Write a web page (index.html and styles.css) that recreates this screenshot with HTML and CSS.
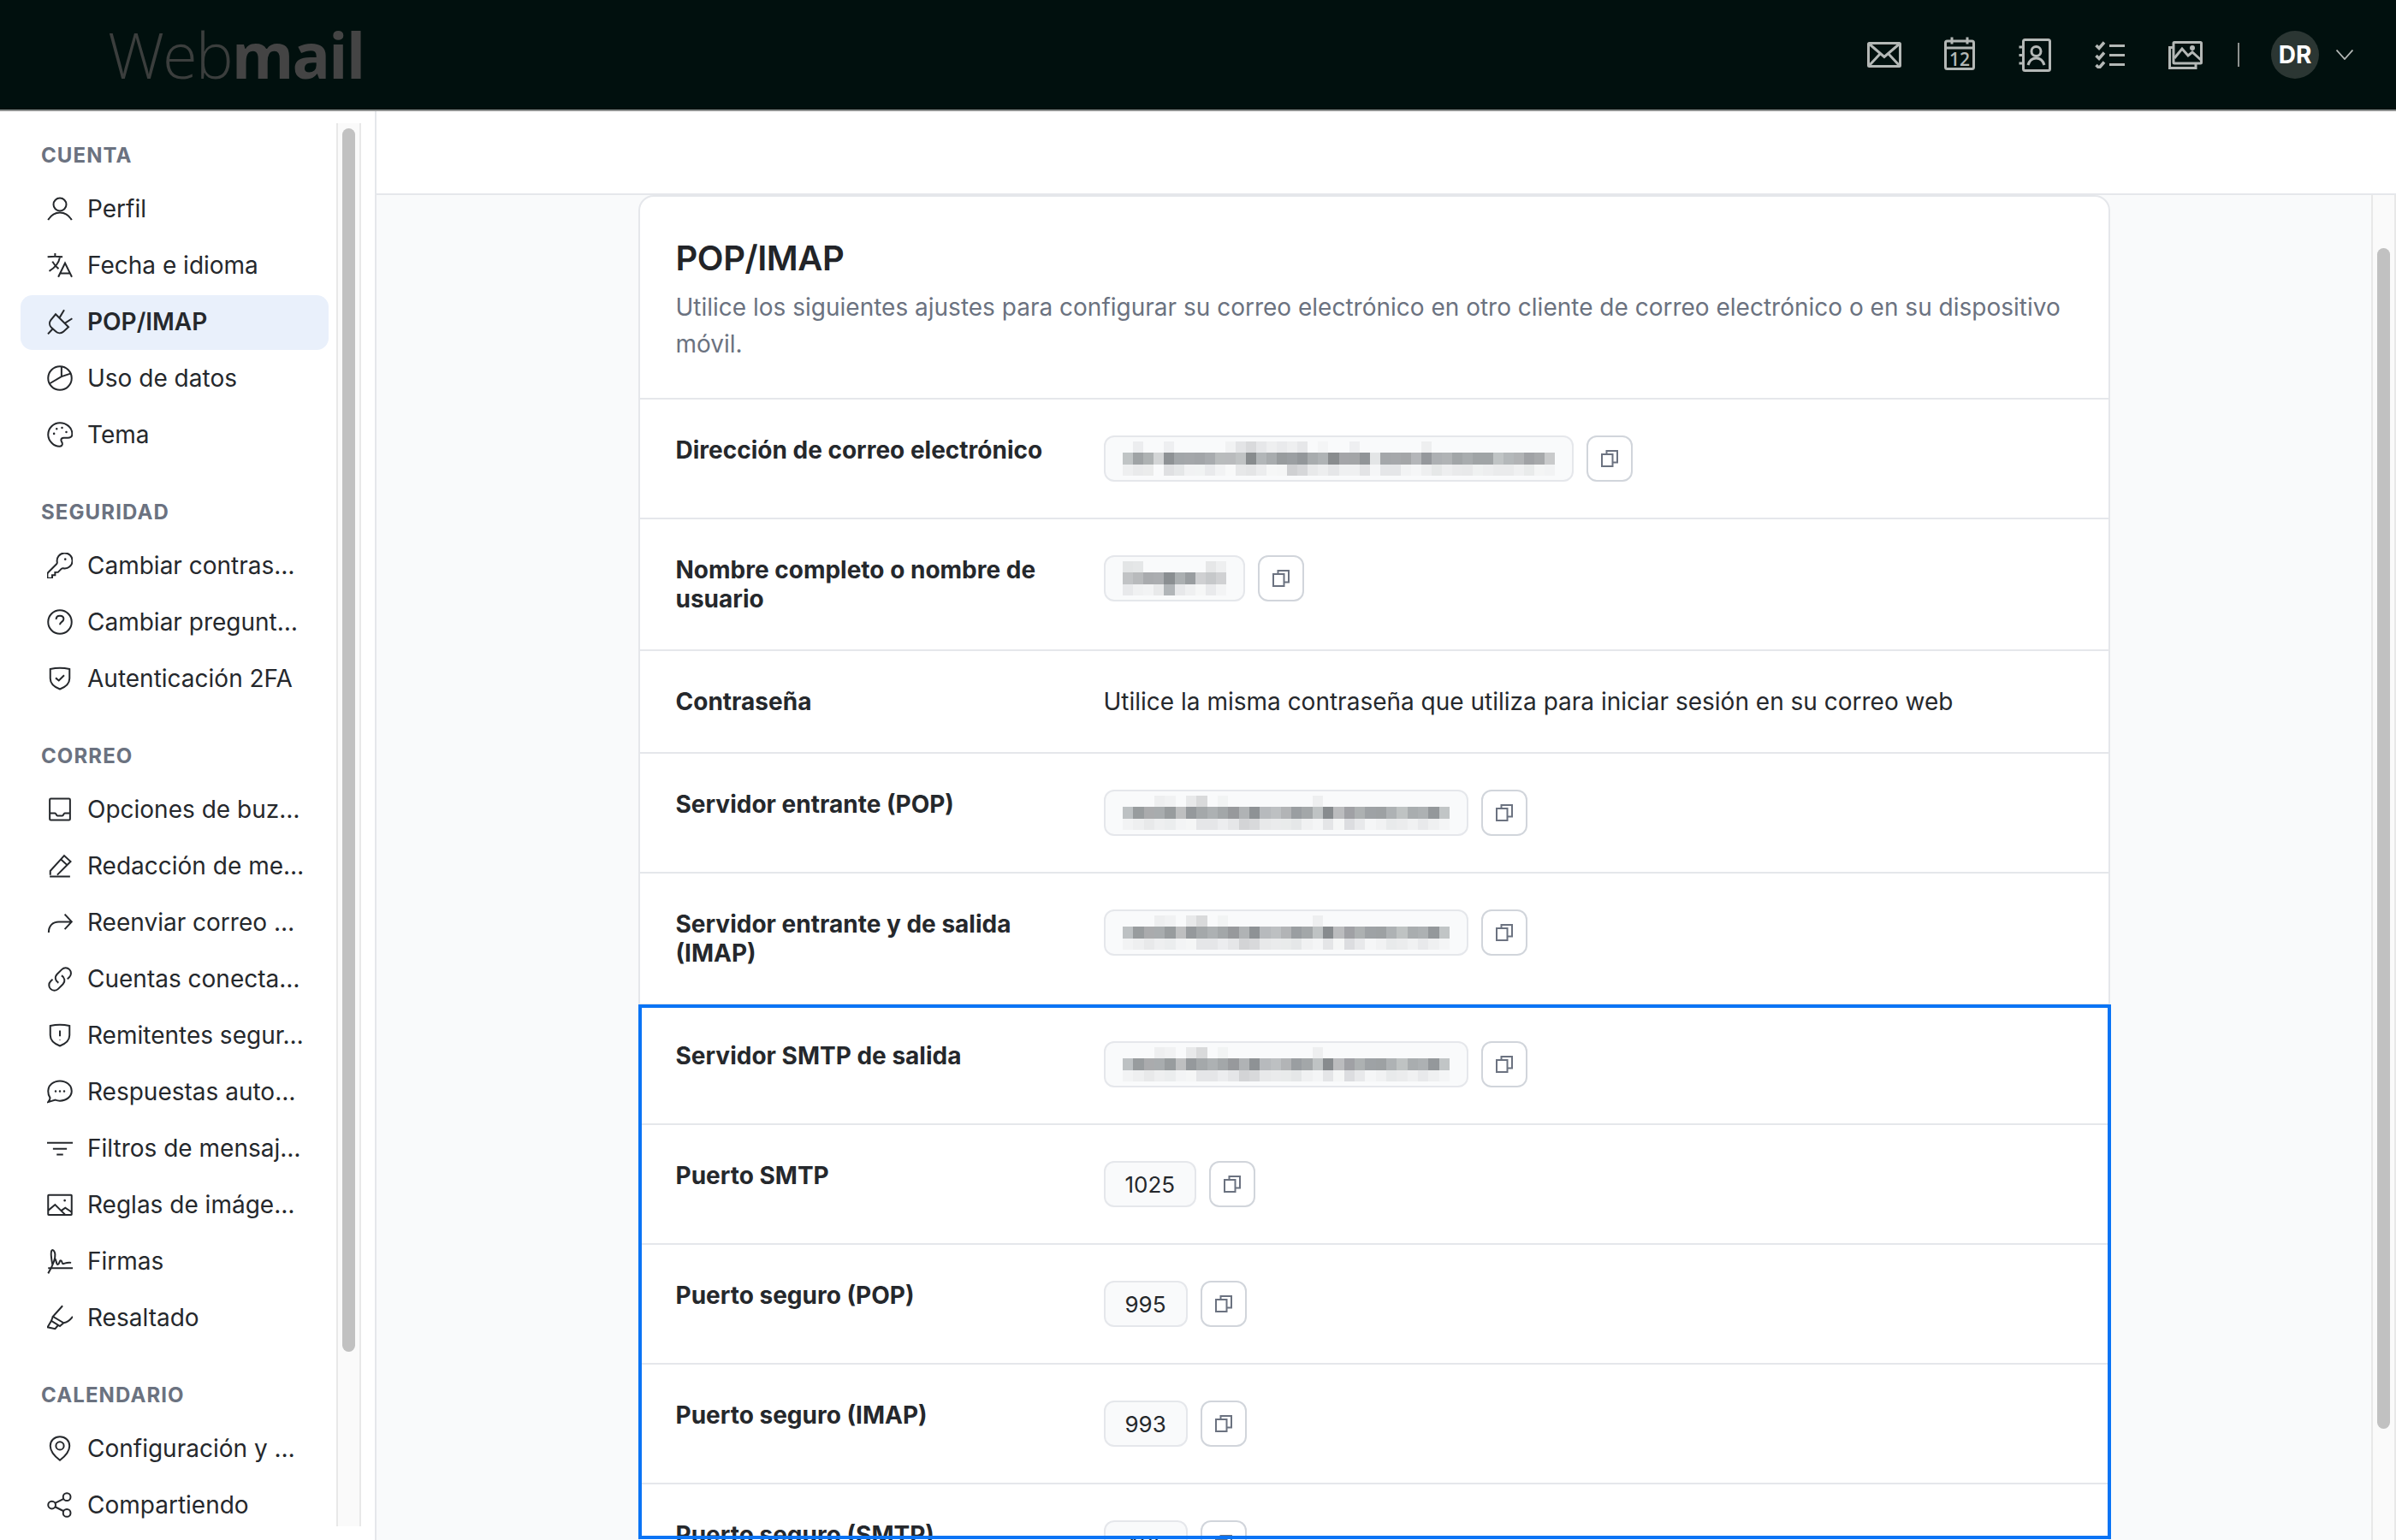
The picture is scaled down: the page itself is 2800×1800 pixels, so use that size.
FILE: index.html
```html
<!DOCTYPE html>
<html lang="es">
<head>
<meta charset="utf-8">
<title>Webmail - POP/IMAP</title>
<link rel="stylesheet" href="styles.css">
</head>
<body>
<svg class="defs" aria-hidden="true">
  <symbol id="copy" viewBox="0 0 20 20"><path d="M6.5 5V1h12.500v13.500h-5"/><rect x="1" y="5" width="12.500" height="14"/></symbol>
  <symbol id="shield-o" viewBox="0 0 24 24"><path d="M3 3.200c6-1.400 12-1.400 18 0V12c0 4.500-3.500 7.900-9 10-5.500-2.100-9-5.500-9-10z"/></symbol>
  <symbol id="blur-email" class="mosaic" viewBox="0 0 42 3" preserveAspectRatio="none">
    <g>
      <rect x="1" fill="#ecedef"/><rect x="4" fill="#eeeff1"/><rect x="10" fill="#f1f2f3"/><rect x="11" fill="#e3e4e6"/><rect x="12" fill="#d9dadc"/><rect x="13" fill="#e6e7e9"/><rect x="14" fill="#eeeff0"/><rect x="15" fill="#e9eaec"/><rect x="16" fill="#eeeff0"/><rect x="17" fill="#e6e7e9"/><rect x="19" fill="#f4f5f6"/><rect x="22" fill="#eeeff1"/><rect x="29" fill="#eeeff0"/>
    </g>
    <g transform="translate(0 1)">
      <rect x="0" fill="#c0c4c5"/><rect x="1" fill="#9fa3a5"/><rect x="2" fill="#aeb2b3"/><rect x="3" fill="#d3d5d6"/><rect x="4" fill="#8e9295"/><rect x="5" fill="#a2a6a9"/><rect x="6" fill="#a4a7aa"/><rect x="7" fill="#a2a5a8"/><rect x="8" fill="#a8abae"/><rect x="9" fill="#b9bcbd"/><rect x="10" fill="#b9bbbd"/><rect x="11" fill="#c0c3c4"/><rect x="12" fill="#888c8e"/><rect x="13" fill="#b2b6b8"/><rect x="14" fill="#a8acae"/><rect x="15" fill="#989c9e"/><rect x="16" fill="#9b9fa2"/><rect x="17" fill="#93979a"/><rect x="18" fill="#a8acae"/><rect x="19" fill="#afb3b5"/><rect x="20" fill="#898c8e"/><rect x="21" fill="#a4a5a8"/><rect x="22" fill="#a3a5a7"/><rect x="23" fill="#919598"/><rect x="24" fill="#e3e5e6"/><rect x="25" fill="#a4a7aa"/><rect x="26" fill="#a6a8ab"/><rect x="27" fill="#a4a6a8"/><rect x="28" fill="#b4b6b9"/><rect x="29" fill="#95989c"/><rect x="30" fill="#adb0b3"/><rect x="31" fill="#b0b3b5"/><rect x="32" fill="#a1a5a7"/><rect x="33" fill="#a8acae"/><rect x="34" fill="#a0a4a6"/><rect x="35" fill="#a0a4a6"/><rect x="36" fill="#c0c4c5"/><rect x="37" fill="#b4b8ba"/><rect x="38" fill="#b1b3b5"/><rect x="39" fill="#a0a2a5"/><rect x="40" fill="#a7a9ab"/><rect x="41" fill="#c9cacb"/>
    </g>
    <g transform="translate(0 2)">
      <rect x="0" fill="#eeeff0"/><rect x="1" fill="#e9eaeb"/><rect x="2" fill="#ebecec"/><rect x="4" fill="#dfe0e2"/><rect x="5" fill="#e5e7e8"/><rect x="6" fill="#f1f2f3"/><rect x="7" fill="#f1f3f3"/><rect x="8" fill="#e9eaec"/><rect x="9" fill="#f2f3f4"/><rect x="10" fill="#f8f9f9"/><rect x="11" fill="#e7e8e9"/><rect x="12" fill="#e4e5e6"/><rect x="13" fill="#ecedee"/><rect x="14" fill="#f6f7f7"/><rect x="15" fill="#f5f6f6"/><rect x="16" fill="#cfd0d2"/><rect x="17" fill="#d6d7d9"/><rect x="18" fill="#e8e9ea"/><rect x="19" fill="#edeeef"/><rect x="20" fill="#e5e6e8"/><rect x="21" fill="#eff0f1"/><rect x="22" fill="#eff0f1"/><rect x="23" fill="#e3e4e6"/><rect x="24" fill="#f5f6f7"/><rect x="25" fill="#e5e6e8"/><rect x="26" fill="#e5e6e8"/><rect x="27" fill="#f2f3f4"/><rect x="28" fill="#f5f6f7"/><rect x="29" fill="#eeeff0"/><rect x="30" fill="#e6e8e8"/><rect x="31" fill="#edeeef"/><rect x="32" fill="#e9eaeb"/><rect x="33" fill="#e8e9ea"/><rect x="34" fill="#eff1f1"/><rect x="35" fill="#edeeef"/><rect x="36" fill="#eaebec"/><rect x="37" fill="#eaebec"/><rect x="38" fill="#eff0f1"/><rect x="39" fill="#e9ebeb"/><rect x="40" fill="#f4f5f5"/><rect x="41" fill="#f2f3f4"/>
    </g>
  </symbol>
  <symbol id="blur-name" class="mosaic" viewBox="0 0 10 3" preserveAspectRatio="none">
    <g>
      <rect x="0" fill="#e3e5e6"/><rect x="1" fill="#e5e7e8"/><rect x="8" fill="#e6e7e8"/><rect x="9" fill="#eeeff0"/>
    </g>
    <g transform="translate(0 1)">
      <rect x="0" fill="#c1c3c5"/><rect x="1" fill="#b8babc"/><rect x="2" fill="#a9abae"/><rect x="3" fill="#abadb0"/><rect x="4" fill="#8a8e91"/><rect x="5" fill="#abafb1"/><rect x="6" fill="#999da0"/><rect x="7" fill="#cfd0d2"/><rect x="8" fill="#c6c8ca"/><rect x="9" fill="#d0d1d3"/>
    </g>
    <g transform="translate(0 2)">
      <rect x="0" fill="#e8e9eb"/><rect x="1" fill="#f0f1f2"/><rect x="2" fill="#f2f3f4"/><rect x="3" fill="#e8e9ea"/><rect x="4" fill="#b1b5b8"/><rect x="5" fill="#e7e8ea"/><rect x="6" fill="#eff0f1"/><rect x="7" fill="#f6f7f7"/><rect x="8" fill="#e9eaec"/><rect x="9" fill="#f3f4f5"/>
    </g>
  </symbol>
  <symbol id="blur-server" class="mosaic" viewBox="0 0 31 3" preserveAspectRatio="none">
    <g>
      <rect x="3" fill="#eeeff0"/><rect x="4" fill="#f1f2f3"/><rect x="6" fill="#e8e9ea"/><rect x="7" fill="#d9dadb"/><rect x="9" fill="#f2f4f4"/><rect x="18" fill="#eeeff0"/>
    </g>
    <g transform="translate(0 1)">
      <rect x="0" fill="#bdc1c3"/><rect x="1" fill="#989c9e"/><rect x="2" fill="#aaabad"/><rect x="3" fill="#a8acae"/><rect x="4" fill="#989c9e"/><rect x="5" fill="#bebfc0"/><rect x="6" fill="#95999c"/><rect x="7" fill="#a4a8aa"/><rect x="8" fill="#adb1b3"/><rect x="9" fill="#a3a7a9"/><rect x="10" fill="#97999c"/><rect x="11" fill="#b0b3b5"/><rect x="12" fill="#8e9295"/><rect x="13" fill="#b7babd"/><rect x="14" fill="#bdc0c2"/><rect x="15" fill="#b2b4b6"/><rect x="16" fill="#9a9ea1"/><rect x="17" fill="#a3a7a9"/><rect x="18" fill="#bfc3c4"/><rect x="19" fill="#878b8e"/><rect x="20" fill="#bbbcbe"/><rect x="21" fill="#a0a1a5"/><rect x="22" fill="#adb1b2"/><rect x="23" fill="#9ea2a5"/><rect x="24" fill="#9da1a3"/><rect x="25" fill="#aeb2b4"/><rect x="26" fill="#bfc3c3"/><rect x="27" fill="#a9adaf"/><rect x="28" fill="#adb1b3"/><rect x="29" fill="#94989b"/><rect x="30" fill="#c1c5c6"/>
    </g>
    <g transform="translate(0 2)">
      <rect x="0" fill="#f2f3f4"/><rect x="1" fill="#eeeff0"/><rect x="2" fill="#e8e9ea"/><rect x="3" fill="#eeeff0"/><rect x="4" fill="#ebedee"/><rect x="5" fill="#f3f4f5"/><rect x="6" fill="#f5f6f6"/><rect x="7" fill="#e5e6e8"/><rect x="8" fill="#e5e6e8"/><rect x="9" fill="#ecedef"/><rect x="10" fill="#e5e6e8"/><rect x="11" fill="#d3d4d6"/><rect x="12" fill="#d8d9db"/><rect x="13" fill="#e8e9ea"/><rect x="14" fill="#eaebec"/><rect x="15" fill="#e9ebeb"/><rect x="16" fill="#e5e7e8"/><rect x="17" fill="#f0f1f2"/><rect x="18" fill="#f4f5f6"/><rect x="19" fill="#e4e5e7"/><rect x="20" fill="#f5f6f6"/><rect x="21" fill="#dcdde0"/><rect x="22" fill="#e8e9eb"/><rect x="23" fill="#f5f6f7"/><rect x="24" fill="#f1f2f3"/><rect x="25" fill="#e8eaeb"/><rect x="26" fill="#ebeced"/><rect x="27" fill="#f0f1f2"/><rect x="28" fill="#e8e9eb"/><rect x="29" fill="#eff0f1"/><rect x="30" fill="#f4f5f6"/>
    </g>
  </symbol>
</svg>

<header class="topbar">
  <div class="logo"><span class="logo-light">Web</span><span class="logo-bold">mail</span></div>
  <div class="apps">
    <a class="app"><svg class="app-icon" width="40" height="30" viewBox="0 0 40 30"><rect x="1.500" y="1.500" width="37" height="27" rx="1"/><path d="M2 2l18 15.500L38 2M2 28l13.500-14.500M38 28 24.500 13.500"/></svg></a>
    <a class="app"><svg class="app-icon app-up" width="36" height="39" viewBox="0 0 36 39"><rect x="1.500" y="5" width="33" height="32.500" rx="2"/><path d="M2 13h32M9 .5v8M27 .5v8"/><text class="app-text" x="18" y="33.500">12</text></svg></a>
    <a class="app"><svg class="app-icon" width="38" height="39" viewBox="0 0 38 39"><rect x="5.500" y="1.500" width="31" height="36" rx="2"/><path d="M.5 10h5M.5 19.500h5M.5 29h5M11 31c1.500-5 5-8 9.500-8s8 3 9.500 8"/><circle cx="20.500" cy="15" r="5.500"/></svg></a>
    <a class="app"><svg class="app-icon" width="36" height="32" viewBox="0 0 36 32"><path class="thin" d="M1.500 5l3.500 3.500L11 1.500M1.500 17l3.500 3.500L11 13.500M1.500 28l3.500 3.500L11 24.500"/><path d="M17 5.500h18M17 16.500h18M17 27.500h18"/></svg></a>
    <a class="app"><svg class="app-icon" width="40" height="33" viewBox="0 0 40 33"><rect x="6" y="1.500" width="32.500" height="24.500" rx="1"/><path d="M6 7.500H1.500v24H32V26M7 20l9-11 7 8 5-4 10 9"/><circle cx="28" cy="8" r="1.500"/></svg></a>
    <span class="divider"></span>
    <div class="avatar">DR</div>
    <svg class="chevron" width="20" height="12" viewBox="0 0 20 12"><path d="M.5 .5 10 11 19.500 .5"/></svg>
  </div>
</header>

<div class="layout">
  <aside class="sidebar">
    <nav class="nav">
      <section class="nav-group">
        <h3 class="nav-title">CUENTA</h3>
        <a class="nav-item"><svg class="ico" viewBox="0 0 24 24"><circle cx="12" cy="8" r="6"/><path d="M1 22.500c2.500-4.500 6.500-7 11-7s8.500 2.500 11 7"/></svg><span class="nav-text">Perfil</span></a>
        <a class="nav-item"><svg class="ico" viewBox="0 0 24 24"><path d="M10.500 23 16.800 10l6.400 13M12 19.500h9.500M.5 4.200c4.800-.5 9.500-.5 14 0M7.500 4V.8M12 4.500c-1 5.500-5 10-10 13M5 8.500c1.500 2.800 3.500 5 5.800 6.800"/></svg><span class="nav-text">Fecha e idioma</span></a>
        <a class="nav-item active"><svg class="ico" viewBox="0 0 24 24"><path d="M8 5l12 12-5 4.500c-2 1.500-5 1.500-7-.5l-4-3.500c-2-2-2-5-.5-7zM11.500 8.500 16 1M16.500 13.500l7-4.500M5 19 .8 23.500"/></svg><span class="nav-text">POP/IMAP</span></a>
        <a class="nav-item"><svg class="ico" viewBox="0 0 24 24"><circle cx="12" cy="12" r="11"/><path d="M13.500 1.200V10.500L22.500 7.500M13.500 10.500 2.500 17"/></svg><span class="nav-text">Uso de datos</span></a>
        <a class="nav-item"><svg class="ico" viewBox="0 0 24 24"><path d="M12 1C6 1 1 6 1 12S6.500 23 11.500 23c2 0 3-1.300 2.800-2.700-.1-1.200-1.200-2-1.200-3.200 0-1.300 1.200-2.100 2.500-2.100h3.900c2.400 0 4-1.500 4-3.700C23.500 5.300 18 1 12 1z"/><path class="dot" d="M6.500 11v.1M9 6.500v.1M14 5.500v.1M18 9.500v.1"/></svg><span class="nav-text">Tema</span></a>
      </section>
      <section class="nav-group">
        <h3 class="nav-title">SEGURIDAD</h3>
        <a class="nav-item"><svg class="ico" viewBox="0 0 24 24"><path class="scaled" transform="translate(-2.400 -2.400) scale(1.200)" d="M21.750 8.250a6 6 0 0 1-7.029 5.912c-.563-.097-1.159.026-1.563.43L10.500 17.250H8.250v2.250H6v2.250H2.250v-2.818c0-.597.237-1.170.659-1.591l6.499-6.499c.404-.404.527-1 .43-1.563A6 6 0 1 1 21.750 8.250z"/><path class="dot" d="M17 6v.1"/></svg><span class="nav-text">Cambiar contras…</span></a>
        <a class="nav-item"><svg class="ico" viewBox="0 0 24 24"><circle cx="12" cy="12" r="11"/><path d="M8.500 9.500c0-2 1.500-3.300 3.500-3.300s3.500 1.200 3.500 3c0 2.800-3.500 2.600-3.500 5.300M12 17.500v.1"/></svg><span class="nav-text">Cambiar pregunt…</span></a>
        <a class="nav-item"><svg class="ico" viewBox="0 0 24 24"><use href="#shield-o"/><path d="M8 11.500l3 2.500 5-5"/></svg><span class="nav-text">Autenticación 2FA</span></a>
      </section>
      <section class="nav-group">
        <h3 class="nav-title">CORREO</h3>
        <a class="nav-item"><svg class="ico" viewBox="0 0 24 24"><rect x="2.500" y="2" width="19" height="20" rx="1"/><path d="M2.500 15.500h5c.8 0 1.200 2.500 2.200 2.500h4.600c1 0 1.400-2.500 2.200-2.500h5"/></svg><span class="nav-text">Opciones de buz…</span></a>
        <a class="nav-item"><svg class="ico" viewBox="0 0 24 24"><path d="M3 20.500v-3.700L16 2.500l6 5.500L9.500 20.500M13 6l6 5.500M2.500 22h19"/></svg><span class="nav-text">Redacción de me…</span></a>
        <a class="nav-item"><svg class="ico" viewBox="0 0 24 24"><path d="M1.500 21.500c0-6 3.500-10 9.500-10h12M16.500 4.500l6.500 7-6.500 7"/></svg><span class="nav-text">Reenviar correo …</span></a>
        <a class="nav-item"><svg class="ico" viewBox="0 0 24 24"><path d="M13.500 9a5 5 0 0 1 1.400 8l-4.500 4.500a5 5 0 0 1-7.100-7.100l1.900-1.900M19 12.300l1.900-1.900a5 5 0 0 0-7.100-7.100L9.300 7.800a5 5 0 0 0 1.400 8"/></svg><span class="nav-text">Cuentas conecta…</span></a>
        <a class="nav-item"><svg class="ico" viewBox="0 0 24 24"><use href="#shield-o"/><path d="M12 7.500v5.500M12 16v.4"/></svg><span class="nav-text">Remitentes segur…</span></a>
        <a class="nav-item"><svg class="ico" viewBox="0 0 24 24"><path d="M12 2c6 0 11 4 11 9.300S18 20.500 12 20.500c-1.500 0-3-.3-4.300-.8l-6.700 2c1-1.200 1.800-2.500 1.800-4-1.200-1.600-1.800-3.900-1.800-6.400C1 6 6 2 12 2z"/><path class="dot" d="M8 11.500v.1M12 11.500v.1M16 11.500v.1"/></svg><span class="nav-text">Respuestas auto…</span></a>
        <a class="nav-item"><svg class="ico" viewBox="0 0 24 24"><path d="M0 7h24M5.500 12.500h13M9 18h6"/></svg><span class="nav-text">Filtros de mensaj…</span></a>
        <a class="nav-item"><svg class="ico" viewBox="0 0 24 24"><rect x="1" y="3" width="22" height="18.500" rx=".5"/><path d="M1 17.500l6.500-5.500 9.500 9.500M13.500 17.500l3.500-2.500 6 4"/><path class="dot" d="M16.500 8v.1"/></svg><span class="nav-text">Reglas de imáge…</span></a>
        <a class="nav-item"><svg class="ico" viewBox="0 0 24 24"><path d="M1 23.500c3-5 7-13.500 6.500-18-.3-3-2-4.500-3-3.500-1.500 1.500-.3 9 .7 14M7.500 10c1 .5 1.200 6 2.800 5s1.200-4 2.700-3.500.5 3 2 3 2.500-1.500 7.500-1M1 18.500h23"/></svg><span class="nav-text">Firmas</span></a>
        <a class="nav-item"><svg class="ico" viewBox="0 0 24 24"><path d="M14.500 1 5.500 11l10 6c3-.5 6-2.500 8.500-6M5.500 11 4 15l8 5 3.500-3M4 15l-3.500 6 7 1.500 3-3.500"/></svg><span class="nav-text">Resaltado</span></a>
      </section>
      <section class="nav-group">
        <h3 class="nav-title">CALENDARIO</h3>
        <a class="nav-item"><svg class="ico" viewBox="0 0 24 24"><path d="M12 1c-5 0-9 3.700-9 8.500 0 5.500 4.500 10 9 13.500 4.500-3.500 9-8 9-13.500C21 4.700 17 1 12 1z"/><circle cx="12" cy="9.500" r="3.700"/></svg><span class="nav-text">Configuración y …</span></a>
        <a class="nav-item"><svg class="ico" viewBox="0 0 24 24"><circle cx="4.500" cy="12" r="3.500"/><circle cx="18.500" cy="4.500" r="3.500"/><circle cx="18.500" cy="19.500" r="3.500"/><path d="M7.500 10.300l8-4M7.500 13.800l8 4"/></svg><span class="nav-text">Compartiendo</span></a>
      </section>
    </nav>
    <div class="scrollbar side-track"><div class="thumb side-thumb"></div></div>
  </aside>

  <div class="main">
    <div class="band"></div>
    <div class="main-body">
      <div class="scroller">
        <article class="card">
          <div class="card-head">
            <h1 class="card-title">POP/IMAP</h1>
            <p class="card-desc">Utilice los siguientes ajustes para configurar su correo electrónico en otro cliente de correo electrónico o en su dispositivo móvil.</p>
          </div>
          <div class="row">
            <div class="label">Dirección de correo electrónico</div>
            <div class="value"><span class="chip"><svg class="blur blur-email"><use href="#blur-email"/></svg></span><button class="copy"><svg class="copy-ico"><use href="#copy"/></svg></button></div>
          </div>
          <div class="row">
            <div class="label">Nombre completo o nombre de usuario</div>
            <div class="value"><span class="chip"><svg class="blur blur-name"><use href="#blur-name"/></svg></span><button class="copy"><svg class="copy-ico"><use href="#copy"/></svg></button></div>
          </div>
          <div class="row">
            <div class="label">Contraseña</div>
            <div class="value plain">Utilice la misma contraseña que utiliza para iniciar sesión en su correo web</div>
          </div>
          <div class="row">
            <div class="label">Servidor entrante (POP)</div>
            <div class="value"><span class="chip"><svg class="blur blur-server"><use href="#blur-server"/></svg></span><button class="copy"><svg class="copy-ico"><use href="#copy"/></svg></button></div>
          </div>
          <div class="row">
            <div class="label">Servidor entrante y de salida (IMAP)</div>
            <div class="value"><span class="chip"><svg class="blur blur-server"><use href="#blur-server"/></svg></span><button class="copy"><svg class="copy-ico"><use href="#copy"/></svg></button></div>
          </div>
          <div class="highlighted">
            <div class="row">
              <div class="label">Servidor SMTP de salida</div>
              <div class="value"><span class="chip"><svg class="blur blur-server"><use href="#blur-server"/></svg></span><button class="copy"><svg class="copy-ico"><use href="#copy"/></svg></button></div>
            </div>
            <div class="row">
              <div class="label">Puerto SMTP</div>
              <div class="value"><span class="chip num">1025</span><button class="copy"><svg class="copy-ico"><use href="#copy"/></svg></button></div>
            </div>
            <div class="row">
              <div class="label">Puerto seguro (POP)</div>
              <div class="value"><span class="chip num">995</span><button class="copy"><svg class="copy-ico"><use href="#copy"/></svg></button></div>
            </div>
            <div class="row">
              <div class="label">Puerto seguro (IMAP)</div>
              <div class="value"><span class="chip num">993</span><button class="copy"><svg class="copy-ico"><use href="#copy"/></svg></button></div>
            </div>
            <div class="row">
              <div class="label">Puerto seguro (SMTP)</div>
              <div class="value"><span class="chip num">465</span><button class="copy"><svg class="copy-ico"><use href="#copy"/></svg></button></div>
            </div>
            <div class="highlight-box"></div>
          </div>
        </article>
      </div>
      <div class="scrollbar main-track"><div class="thumb main-thumb"></div></div>
    </div>
  </div>
</div>
</body>
</html>
```
FILE: styles.css
```css
* { box-sizing: border-box; }
html, body { margin: 0; height: 100%; }
body {
  width: 2800px;
  height: 1800px;
  overflow: hidden;
  font-family: Inter, "Liberation Sans", sans-serif;
  color: #25282c;
  background: #fff;
  display: flex;
  flex-direction: column;
}
.defs { position: absolute; width: 0; height: 0; }
.mosaic rect { width: 1px; height: 1px; shape-rendering: crispEdges; }

/* top bar */
.topbar {
  flex: none;
  height: 130px;
  background: #01100e;
  border-bottom: 2px solid #8f9190;
  display: flex;
  align-items: center;
  justify-content: space-between;
  padding: 0 50px 0 126px;
}
.logo { font-family: "Open Sans", sans-serif; font-size: 74px; line-height: 1; letter-spacing: -2px; }
.logo-light { font-weight: 300; color: #3b3e3d; }
.logo-bold { font-weight: 700; color: #444; }
.apps { display: flex; align-items: center; }
.app { width: 88px; display: flex; justify-content: center; align-items: center; }
.app-icon { fill: none; stroke: #b4b8b6; stroke-width: 3; }
.app-icon.app-up { margin-top: -3px; }
.app-icon .thin { stroke-width: 3.500; }
.app-text { fill: #b4b8b6; stroke: none; font-family: "Open Sans", sans-serif; font-size: 21px; font-weight: 600; text-anchor: middle; }
.divider { width: 2px; height: 28px; background: #8d918f; margin: 0 37px 0 17px; }
.avatar {
  width: 56px; height: 56px; border-radius: 50%;
  background: #2b3633; color: #fff;
  display: flex; align-items: center; justify-content: center;
  font-size: 28px; font-weight: 700;
}
.chevron { margin-left: 20px; fill: none; stroke: #b4b8b6; stroke-width: 1.800; }

/* layout */
.layout { flex: 1; display: flex; min-height: 0; }
.sidebar {
  flex: none;
  width: 440px;
  display: flex;
  border-right: 2px solid #e5e7eb;
  padding-right: 16px;
}
.nav { width: 393px; overflow: hidden; padding: 35px 9px 0 24px; }
.nav-group { margin-bottom: 41px; }
.nav-title {
  margin: 0 0 14px 24px;
  font-size: 24px; line-height: 34px; font-weight: 700;
  letter-spacing: 1.100px;
  color: #6b7280;
}
.nav-item {
  display: flex; align-items: center;
  height: 64px;
  margin-bottom: 2px;
  padding: 0 26px 2px 31px;
  border-radius: 14px;
  font-size: 28px;
  gap: 17px;
}
.nav-item.active { background: #e9f0fb; font-weight: 600; }
.nav-text { white-space: nowrap; }
.ico { flex: none; width: 30px; height: 30px; fill: none; stroke: #25282c; stroke-width: 1.600; }
.ico .dot { stroke-width: 2; stroke-linecap: round; }
.ico .scaled { stroke-width: 1.330; }

.scrollbar {
  flex: none;
  width: 29px;
  background: #fafafa;
  border-left: 2px solid #e8e8e8;
  border-right: 2px solid #e8e8e8;
  padding: 0 5px;
}
.thumb { background: #c1c1c1; border-radius: 8px; }
.side-track { margin: 14px 0 16px; }
.side-thumb { margin-top: 6px; height: 1430px; }
.main-thumb { margin-top: 62px; height: 1380px; }

/* main */
.main { flex: 1; min-width: 0; display: flex; flex-direction: column; }
.band { flex: none; height: 98px; border-bottom: 2px solid #e5e7eb; }
.main-body { flex: 1; min-height: 0; display: flex; background: #f9fafb; }
.scroller { flex: 1; min-width: 0; overflow: hidden; }
.card {
  width: 1720px;
  margin: 0 auto;
  background: #fff;
  border: 2px solid #e5e7eb;
  border-radius: 18px 18px 0 0;
}
.card-head { padding: 42px 42px 0; height: 235px; }
.card-title { margin: 0 0 6px; font-size: 40px; line-height: 60px; font-weight: 600; letter-spacing: -.45px; color: #222428; }
.card-desc { margin: 0; font-size: 28px; line-height: 43px; color: #6b7280; }
.row {
  display: flex;
  border-top: 2px solid #e5e7eb;
  padding: 42px;
}
.label { flex: none; width: 500px; padding-right: 40px; font-size: 28px; line-height: 34px; font-weight: 650; }
.value { display: flex; gap: 15px; align-items: flex-start; }
.value.plain { font-size: 28px; line-height: 34px; }
.chip {
  display: flex; align-items: center;
  height: 54px;
  padding: 0 20px;
  background: #f9fafb;
  border: 2px solid #e5e7eb;
  border-radius: 12px;
}
.chip.num { padding: 0 23px; font-size: 26px; }
.blur { display: block; height: 40px; }
.blur-email { width: 505px; }
.blur-name { width: 121px; }
.blur-server { width: 382px; }
.copy {
  width: 54px; height: 54px; padding: 0;
  display: flex; align-items: center; justify-content: center;
  background: #fff;
  border: 2px solid #d1d5db;
  border-radius: 12px;
}
.copy-ico { width: 20px; height: 20px; fill: none; stroke: #6b7280; stroke-width: 2; }
.highlighted { position: relative; }
.highlight-box {
  position: absolute;
  left: -2px; right: -3px; top: 1px;
  height: 625px;
  border: 4px solid #0a74f5;
  pointer-events: none;
}
```
